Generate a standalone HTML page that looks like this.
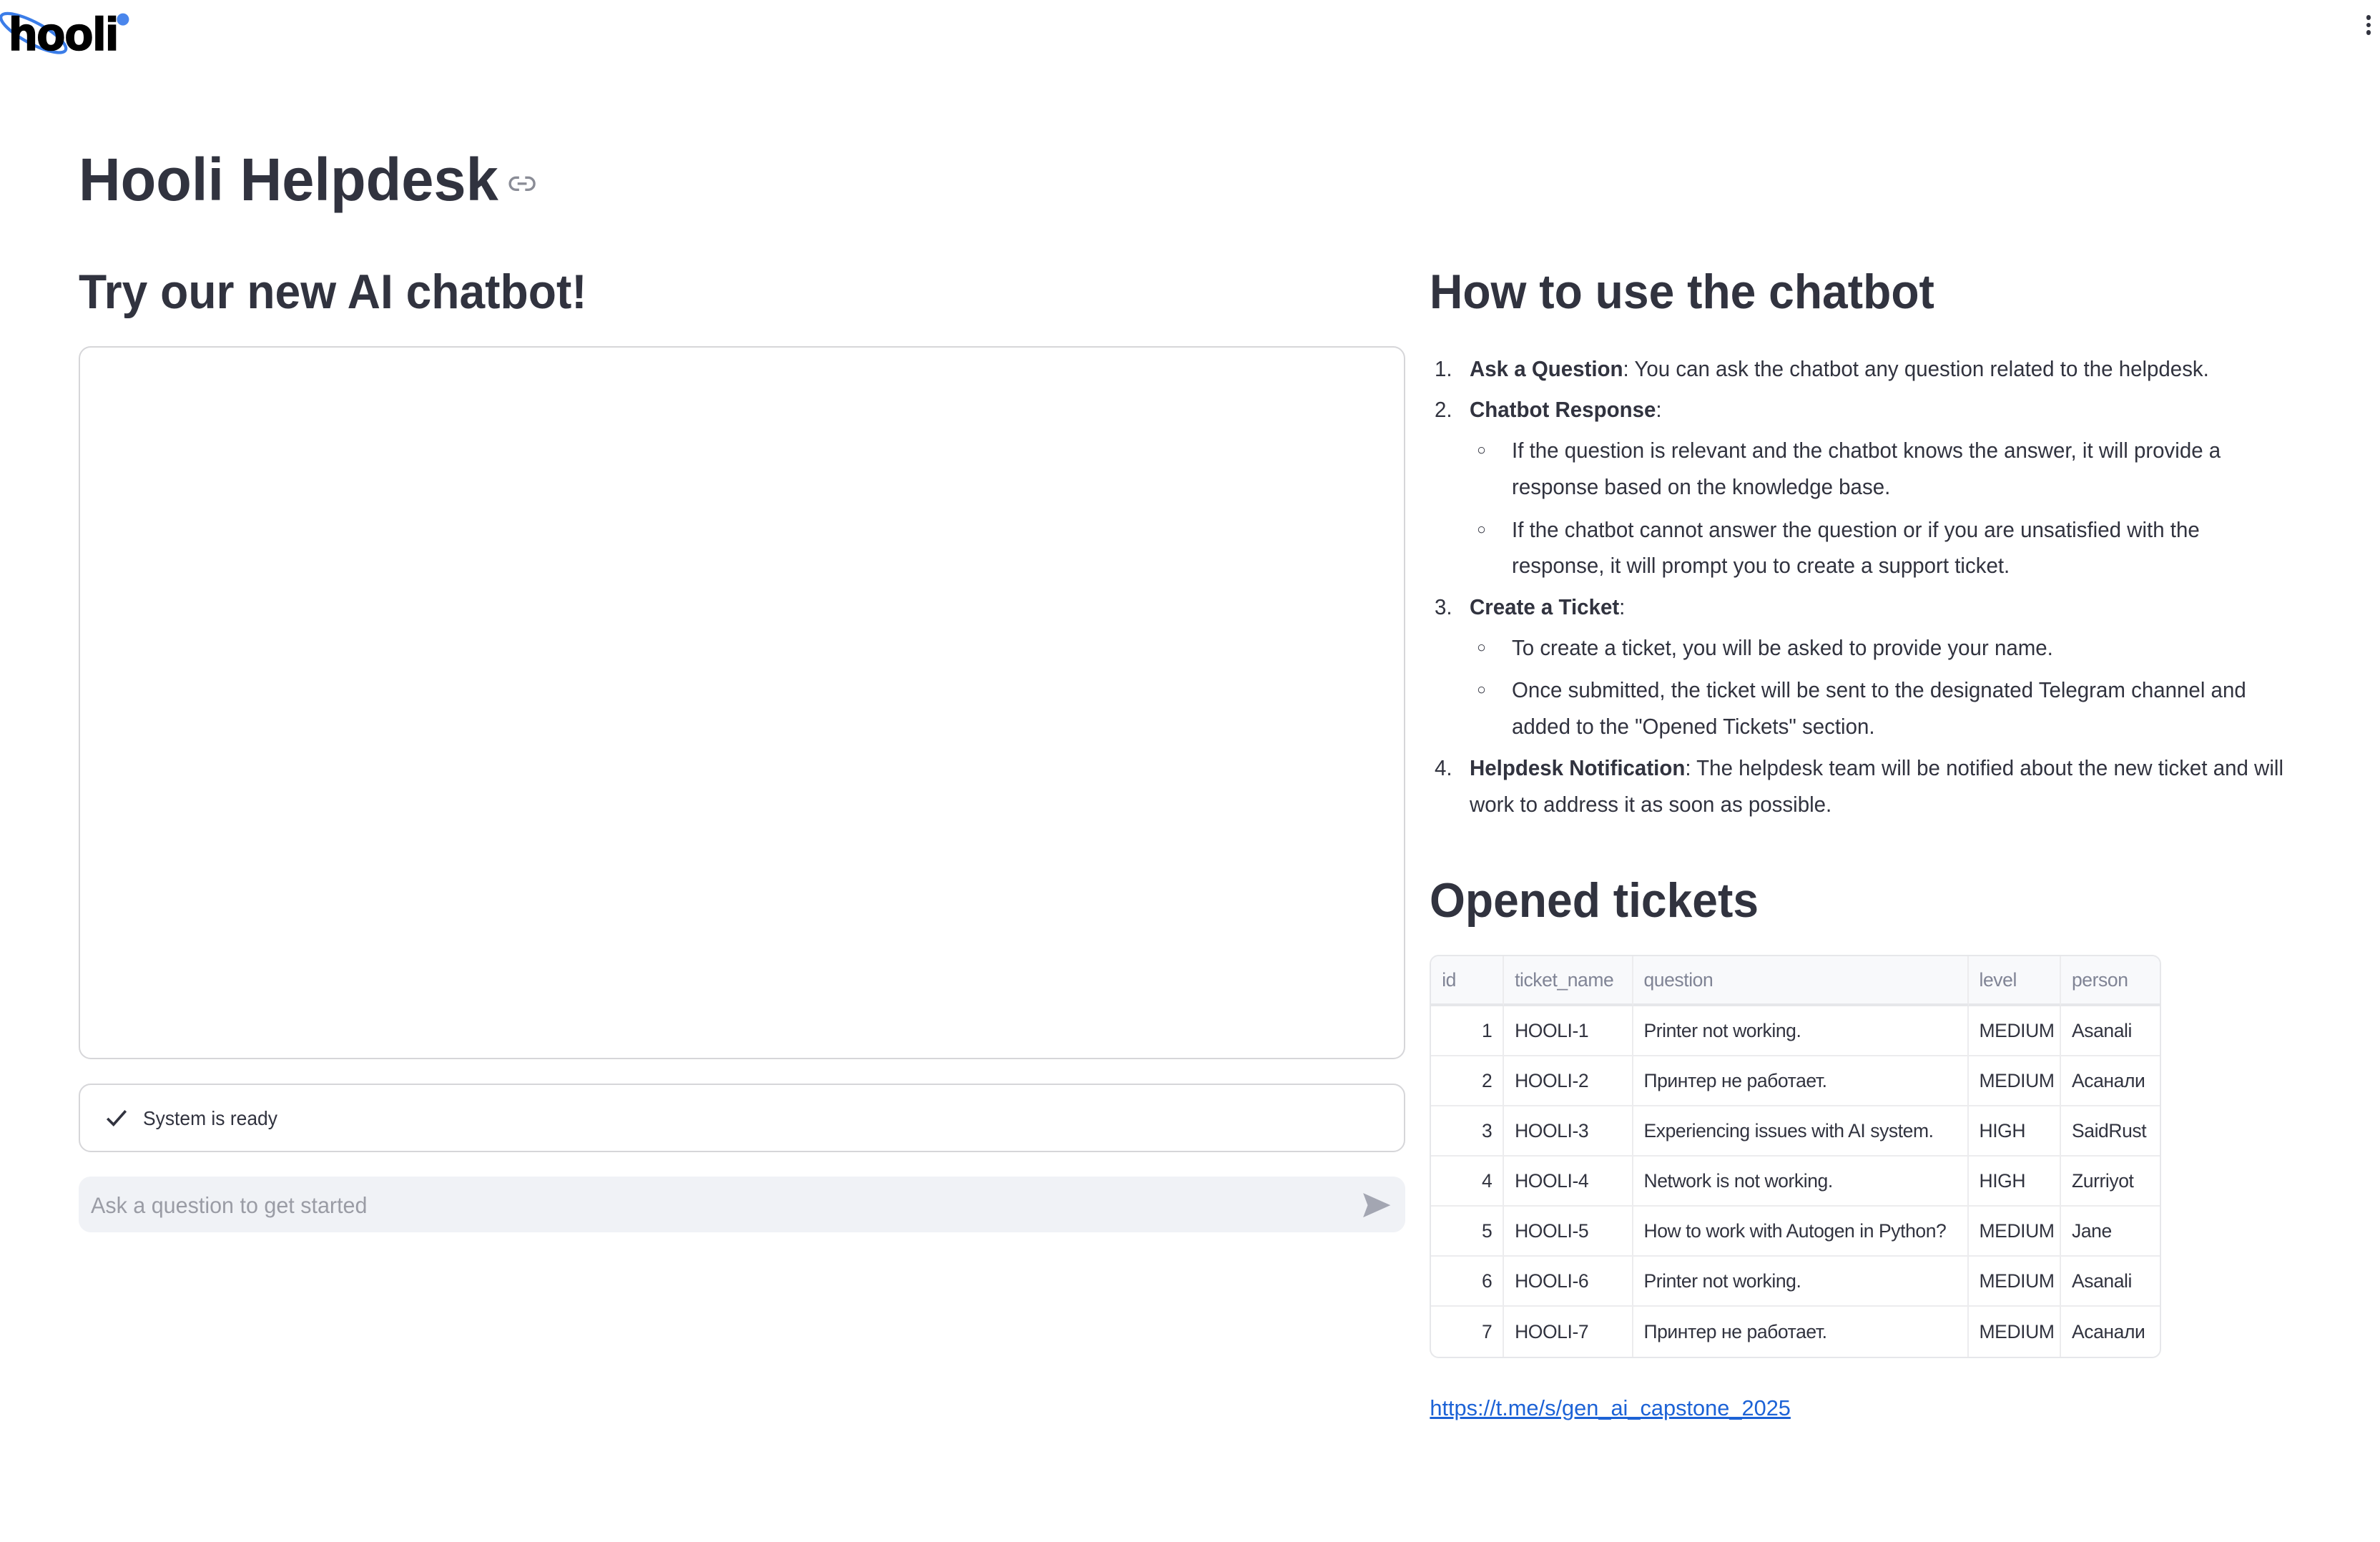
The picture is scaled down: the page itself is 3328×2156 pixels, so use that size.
<!DOCTYPE html>
<html><head><meta charset="utf-8"><style>
html,body{margin:0;padding:0;background:#fff}
#w{position:relative;width:1568px;height:1016px;zoom:2.12245;font-family:"Liberation Sans",sans-serif;color:#31333F;overflow:hidden}
.a{position:absolute;white-space:nowrap}
.n{display:inline-block;transform:scaleX(.958);transform-origin:0 50%}
.h{transform:scaleX(.945)}
.li{font-size:14.5px;line-height:20px}
b{font-weight:700}
table{position:absolute;left:942px;top:629px;width:480px;table-layout:fixed;border-collapse:separate;border-spacing:0;border:1px solid #e6e7ea;border-radius:6px;font-size:12.5px;overflow:hidden;letter-spacing:-.2px}
td,th{height:33px;border-right:1px solid #ececee;border-bottom:1px solid #ececee;padding:0 7px;white-space:nowrap;box-sizing:border-box;text-align:left;font-weight:400;overflow:hidden}
th{background:#f8f9fb;color:#808495;height:33px;border-bottom:2px solid #e6e7ea}
tr td:last-child,tr th:last-child{border-right:none}
tr:last-child td{border-bottom:none}
td:first-child{text-align:right}
</style></head><body><div id="w">
<svg class="a" style="left:0;top:4px" width="90" height="34" viewBox="0 0 90 34">
<ellipse cx="22" cy="18" rx="24" ry="7" transform="rotate(28 22 18)" fill="none" stroke="#3b7de8" stroke-width="2"/>
<text x="6" y="29" font-family="Liberation Sans" font-weight="700" font-size="30" fill="#000" stroke="#000" stroke-width="1.2" textLength="72" lengthAdjust="spacingAndGlyphs">hooli</text>
<circle cx="81" cy="9" r="4" fill="#4a86ec"/>
</svg>
<div class="a" style="left:1559px;top:10px;width:3px">
<div style="width:3px;height:3px;border-radius:50%;background:#31333F;margin-bottom:2px"></div><div style="width:3px;height:3px;border-radius:50%;background:#31333F;margin-bottom:2px"></div><div style="width:3px;height:3px;border-radius:50%;background:#31333F"></div></div>

<div class="a" style="left:52px;top:94px;font-size:40px;font-weight:700;line-height:48px"><span class="n" style="transform:scaleX(.957)">Hooli Helpdesk</span></div>
<svg class="a" style="left:335px;top:114px" width="18" height="14" viewBox="0 0 18 14"><path d="M7 3H5a4 4 0 0 0 0 8h2M11 3h2a4 4 0 0 1 0 8h-2M6 7h6" fill="none" stroke="#8a8c96" stroke-width="1.6"/></svg>

<div class="a" style="left:52px;top:173px;font-size:32px;font-weight:700;line-height:40px"><span class="n h">Try our new AI chatbot!</span></div>
<div class="a" style="left:942px;top:173px;font-size:32px;font-weight:700;line-height:40px"><span class="n h">How to use the chatbot</span></div>

<div class="a" style="left:52px;top:228px;width:872px;height:468px;border:1px solid #d6d6d9;border-radius:8px"></div>
<div class="a" style="left:52px;top:714px;width:872px;height:43px;border:1px solid #d6d6d9;border-radius:8px"></div>
<svg class="a" style="left:69px;top:730px" width="15" height="13" viewBox="0 0 15 13"><path d="M2 7l4 4 8-9" fill="none" stroke="#31333F" stroke-width="1.7"/></svg>
<div class="a" style="left:94px;top:728px;font-size:13px;line-height:18px"><span class="n">System is ready</span></div>
<div class="a" style="left:52px;top:775px;width:874px;height:37px;background:#f0f2f6;border-radius:8px"></div>
<div class="a" style="left:60px;top:784px;font-size:15px;line-height:20px;color:#9a9ca5"><span class="n">Ask a question to get started</span></div>
<svg class="a" style="left:897px;top:785px" width="20" height="18" viewBox="0 0 20 18"><path d="M1 1l18 8-18 8 3-8z" fill="#a3a6b2"/></svg>

<div class="li">
<div class="a" style="left:945px;top:233px"><span class="n">1.</span></div>
<div class="a" style="left:968px;top:233px"><span class="n"><b>Ask a Question</b>: You can ask the chatbot any question related to the helpdesk.</span></div>
<div class="a" style="left:945px;top:260px"><span class="n">2.</span></div>
<div class="a" style="left:968px;top:260px"><span class="n"><b>Chatbot Response</b>:</span></div>
<div class="a" style="left:973px;top:287px;font-size:10px">○</div>
<div class="a" style="left:996px;top:287px"><span class="n">If the question is relevant and the chatbot knows the answer, it will provide a</span></div>
<div class="a" style="left:996px;top:311px"><span class="n">response based on the knowledge base.</span></div>
<div class="a" style="left:973px;top:339px;font-size:10px">○</div>
<div class="a" style="left:996px;top:339px"><span class="n">If the chatbot cannot answer the question or if you are unsatisfied with the</span></div>
<div class="a" style="left:996px;top:363px"><span class="n">response, it will prompt you to create a support ticket.</span></div>
<div class="a" style="left:945px;top:390px"><span class="n">3.</span></div>
<div class="a" style="left:968px;top:390px"><span class="n"><b>Create a Ticket</b>:</span></div>
<div class="a" style="left:973px;top:417px;font-size:10px">○</div>
<div class="a" style="left:996px;top:417px"><span class="n">To create a ticket, you will be asked to provide your name.</span></div>
<div class="a" style="left:973px;top:445px;font-size:10px">○</div>
<div class="a" style="left:996px;top:445px"><span class="n">Once submitted, the ticket will be sent to the designated Telegram channel and</span></div>
<div class="a" style="left:996px;top:469px"><span class="n">added to the "Opened Tickets" section.</span></div>
<div class="a" style="left:945px;top:496px"><span class="n">4.</span></div>
<div class="a" style="left:968px;top:496px"><span class="n"><b>Helpdesk Notification</b>: The helpdesk team will be notified about the new ticket and will</span></div>
<div class="a" style="left:968px;top:520px"><span class="n">work to address it as soon as possible.</span></div>
</div>

<div class="a" style="left:942px;top:574px;font-size:32px;font-weight:700;line-height:40px"><span class="n h">Opened tickets</span></div>

<table>
<colgroup><col style="width:48px"><col style="width:85px"><col style="width:221px"><col style="width:61px"><col style="width:65px"></colgroup>
<tr><th>id</th><th>ticket_name</th><th>question</th><th>level</th><th>person</th></tr>
<tr><td>1</td><td>HOOLI-1</td><td>Printer not working.</td><td>MEDIUM</td><td>Asanali</td></tr>
<tr><td>2</td><td>HOOLI-2</td><td>Принтер не работает.</td><td>MEDIUM</td><td>Асанали</td></tr>
<tr><td>3</td><td>HOOLI-3</td><td>Experiencing issues with AI system.</td><td>HIGH</td><td>SaidRust</td></tr>
<tr><td>4</td><td>HOOLI-4</td><td>Network is not working.</td><td>HIGH</td><td>Zurriyot</td></tr>
<tr><td>5</td><td>HOOLI-5</td><td>How to work with Autogen in Python?</td><td>MEDIUM</td><td>Jane</td></tr>
<tr><td>6</td><td>HOOLI-6</td><td>Printer not working.</td><td>MEDIUM</td><td>Asanali</td></tr>
<tr><td>7</td><td>HOOLI-7</td><td>Принтер не работает.</td><td>MEDIUM</td><td>Асанали</td></tr>
</table>

<div class="a" style="left:942px;top:918px;font-size:14.5px;line-height:20px;color:#1c62d6"><span style="text-decoration:underline">https://t.me/s/gen_ai_capstone_2025</span></div>
</div></body></html>
